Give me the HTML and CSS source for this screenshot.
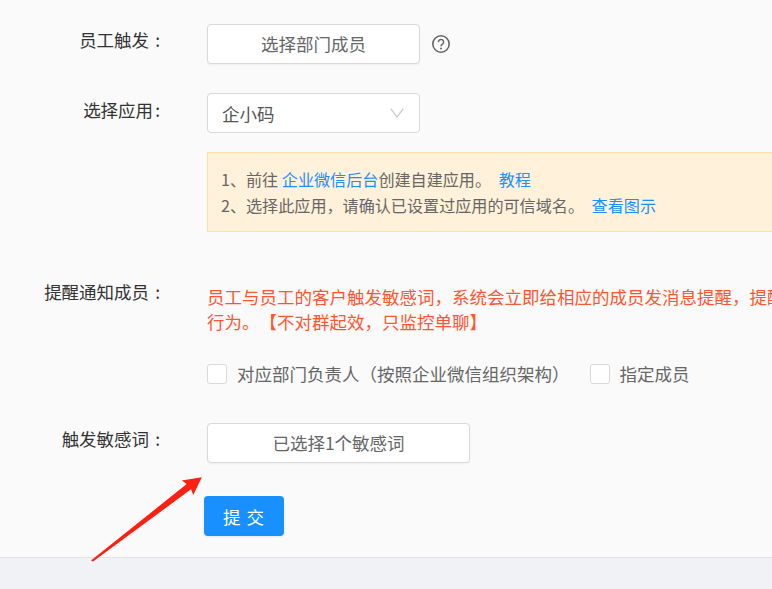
FILE: index.html
```html
<!DOCTYPE html>
<html lang="zh">
<head>
<meta charset="utf-8">
<title>敏感词</title>
<link rel="stylesheet" href="styles.css">
</head>
<body>
<main class="page">
  <form class="form">
    <div class="row row-staff">
      <label class="label">员工触发<span class="colon">:</span></label>
      <div class="field inline">
        <button type="button" class="btn btn-member">选择部门成员</button>
        <svg class="help" viewBox="0 0 18 18" width="18" height="18" aria-hidden="true">
          <circle cx="9" cy="9" r="8.2" fill="none" stroke="#666" stroke-width="1.6"/>
          <path d="M6.4 7.1a2.6 2.6 0 1 1 4 2.1c-1 .6-1.4 1-1.4 2" fill="none" stroke="#666" stroke-width="1.5"/>
          <circle cx="9" cy="13.4" r="1" fill="#666"/>
        </svg>
      </div>
    </div>
    <div class="row row-app">
      <label class="label">选择应用<span class="colon colon-tight">:</span></label>
      <div class="field">
        <div class="select">
          <span>企小码</span>
          <svg viewBox="0 0 14 10" width="14" height="10" aria-hidden="true"><path d="M.7.7 7 9 13.3.7" fill="none" stroke="#c4c4c4" stroke-width="1.1"/></svg>
        </div>
        <div class="notice">
          <p>1、前往 <a>企业微信后台</a>创建自建应用。 <a class="gap">教程</a></p>
          <p>2、选择此应用，请确认已设置过应用的可信域名。 <a class="gap">查看图示</a></p>
        </div>
      </div>
    </div>
    <div class="row row-notify">
      <label class="label">提醒通知成员<span class="colon">:</span></label>
      <div class="field">
        <p class="warn">员工与员工的客户触发敏感词，系统会立即给相应的成员发消息提醒，提醒<br>行为。【不对群起效，只监控单聊】</p>
        <div class="checks">
          <label class="check"><span class="box"></span>对应部门负责人（按照企业微信组织架构）</label>
          <label class="check"><span class="box"></span>指定成员</label>
        </div>
      </div>
    </div>
    <div class="row row-words">
      <label class="label">触发敏感词<span class="colon">:</span></label>
      <div class="field">
        <button type="button" class="btn btn-words">已选择1个敏感词</button>
      </div>
    </div>
    <button type="button" class="submit">提 交</button>
  </form>
  <svg class="arrow" viewBox="0 0 772 589" width="772" height="589" aria-hidden="true">
    <polygon points="91,560.6 186.7,484 181.7,480.5 201.8,477.2 193.3,495 191,489.3 93,561.6" fill="#fb2012"/>
  </svg>
</main>
<footer class="footer"></footer>
</body>
</html>
```
FILE: styles.css
```css
* { box-sizing: border-box; }
html, body { margin: 0; padding: 0; }
body {
  width: 772px;
  height: 589px;
  overflow: hidden;
  background: #f0f2f5;
  font-family: "Noto Sans CJK SC", "Liberation Sans", sans-serif;
  font-size: 17.5px;
  color: #555;
  text-spacing-trim: space-all;
}
.page {
  position: relative;
  height: 557px;
  background: #fafafa;
}
.form { padding-top: 24px; width: 772px; overflow: hidden; }
.row {
  display: grid;
  grid-template-columns: 166px 565px;
  column-gap: 41px;
}
.label {
  display: block;
  text-align: right;
  padding-right: 6px;
  color: #333;
  line-height: 26px;
  white-space: nowrap;
}
.colon { margin-left: 6px; }
.colon-tight { margin-left: 2px; }
.row-staff .label { padding-top: 3px; }
.row-app { margin-top: 29px; }
.row-app .label { padding-top: 4px; }
.row-notify { margin-top: 48px; }
.row-notify .label { margin-top: -1px; }
.row-words { margin-top: 39px; }
.row-words .label { padding-top: 3px; }
.inline { display: flex; align-items: center; gap: 12px; }
.btn {
  display: block;
  height: 40px;
  padding: 0;
  background: #fff;
  border: 1px solid #d9d9d9;
  border-radius: 4px;
  box-shadow: 0 1px 2px rgba(0,0,0,.05);
  font: inherit;
  color: #666;
  line-height: 38px;
}
.btn-member { width: 213px; }
.btn-words { width: 263px; }
.select {
  display: flex;
  align-items: center;
  justify-content: space-between;
  width: 213px;
  height: 40px;
  padding: 0 15px 0 14px;
  background: #fff;
  border: 1px solid #d9d9d9;
  border-radius: 4px;
  color: #555;
}
.notice {
  margin-top: 19px;
  width: 700px;
  height: 80px;
  padding: 13px 13px 0;
  background: #fff1da;
  border: 1px solid #ffdfa6;
  font-size: 16.1px;
  color: #666;
}
.notice p { margin: 0; line-height: 26px; }
.notice a { color: #1890ff; }
.notice .gap { margin-left: 4px; }
.warn {
  margin: 0;
  padding-top: 4px;
  color: #ff5630;
  line-height: 25px;
  white-space: nowrap;
}
.checks {
  display: flex;
  gap: 20px;
  margin-top: 29px;
}
.check {
  display: flex;
  align-items: center;
  height: 21px;
  line-height: 21px;
  color: #666;
  white-space: nowrap;
}
.box {
  width: 20px;
  height: 20px;
  margin-right: 10px;
  background: #fff;
  border: 1px solid #d9d9d9;
  border-radius: 3px;
}
.submit {
  display: block;
  width: 80px;
  height: 40px;
  margin: 33px 0 2px 204px;
  padding: 0;
  background: #1890ff;
  border: 0;
  border-radius: 4px;
  box-shadow: 0 1px 2px rgba(0,0,0,.08);
  color: #fff;
  font: inherit;
  letter-spacing: 1px;
}
.arrow { position: absolute; left: 0; top: 0; pointer-events: none; }
.footer {
  height: 32px;
  border-top: 1px solid #e4e4e4;
  background: #f0f2f5;
}
```
